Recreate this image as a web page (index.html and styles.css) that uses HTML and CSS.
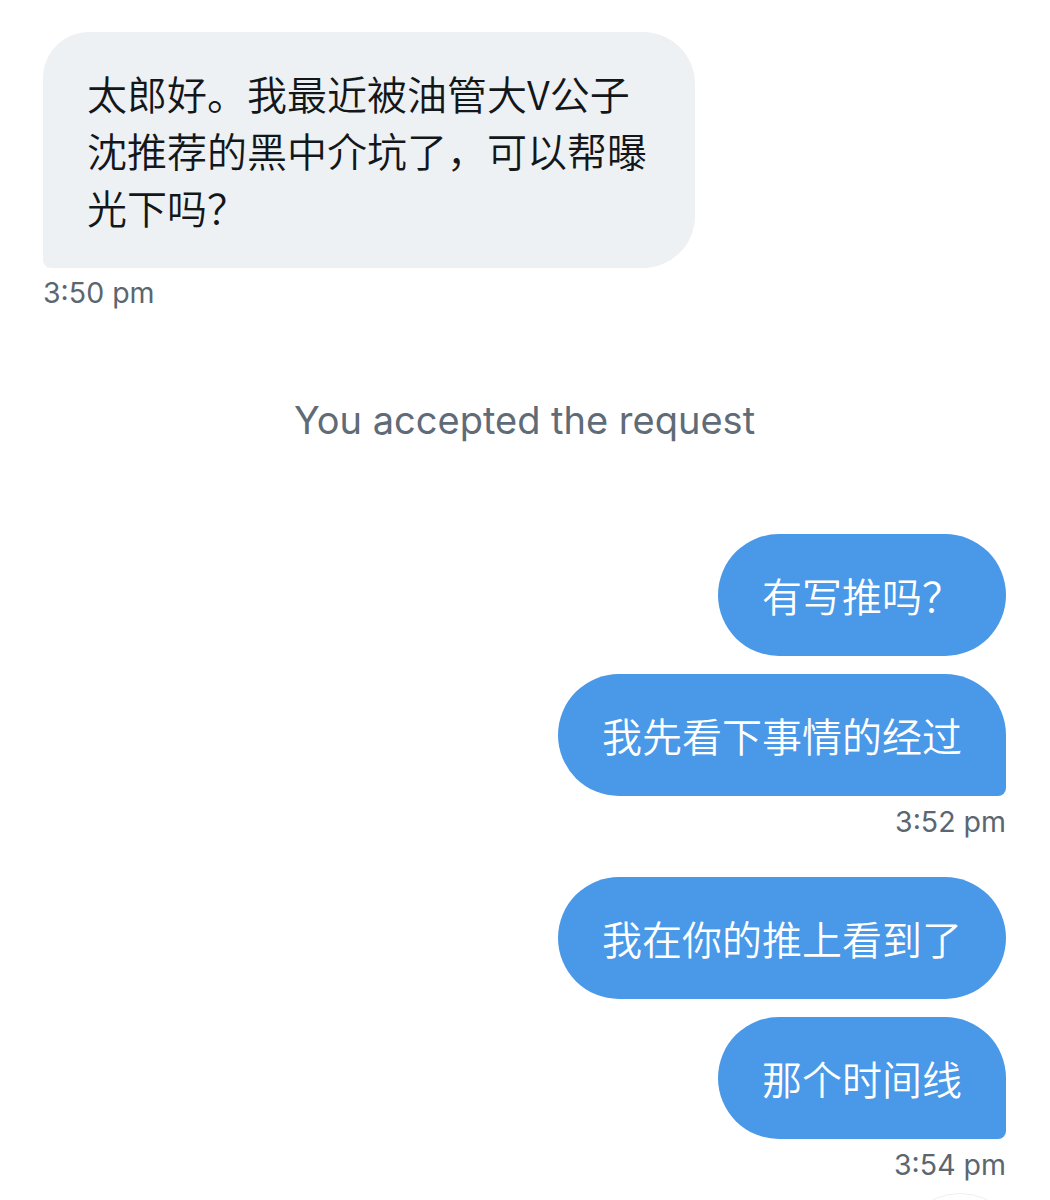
FILE: index.html
```html
<!DOCTYPE html>
<html lang="zh-CN">
<head>
<meta charset="utf-8">
<title>Messages</title>
<link rel="stylesheet" href="styles.css">
</head>
<body>
<main class="thread">
  <div class="group received">
    <div class="bubble gray last">太郎好。我最近被油管大V公子沈推荐的黑中介坑了，可以帮曝光下吗？</div>
    <div class="time">3:50 pm</div>
  </div>

  <div class="notice">You accepted the request</div>

  <div class="group sent first-group">
    <div class="bubble blue">有写推吗？</div>
    <div class="bubble blue last">我先看下事情的经过</div>
    <div class="time">3:52 pm</div>
  </div>

  <div class="group sent second-group">
    <div class="bubble blue">我在你的推上看到了</div>
    <div class="bubble blue last">那个时间线</div>
    <div class="time">3:54 pm</div>
    <div class="ghost-wrap"><div class="ghost"></div></div>
  </div>
</main>
</body>
</html>
```

FILE: styles.css
```css
html, body {
  margin: 0;
  padding: 0;
  background: #ffffff;
  overflow: hidden;
}

body {
  width: 1050px;
  height: 1200px;
}

.thread {
  display: flex;
  flex-direction: column;
  padding: 32px 44px 0 43px;
}

.group {
  display: flex;
  flex-direction: column;
}

.group.received {
  align-items: flex-start;
}

.group.sent {
  align-items: flex-end;
  gap: 18px;
}

.group.first-group {
  margin-top: 90px;
}

.group.second-group {
  margin-top: 39px;
}

.bubble {
  box-sizing: border-box;
  font-family: "Noto Sans CJK SC", "Noto Sans", sans-serif;
  font-size: 40px;
  font-weight: 350;
  line-height: 57px;
  padding: 33px 44px 32px 44px;
}

.bubble.gray {
  background: #eef1f3;
  color: #14171a;
  max-width: 652px;
  border-radius: 46px 52px 52px 8px;
}

.bubble.blue {
  background: #4a98e8;
  color: #ffffff;
  border-radius: 61px;
}

.bubble.blue.last {
  border-radius: 61px 61px 8px 61px;
}

.time {
  font-family: "Inter", "Liberation Sans", sans-serif;
  font-size: 28.5px;
  line-height: 32px;
  color: #5b6670;
  margin-top: 9px;
}

.group.sent .time {
  margin-top: -8px;
}

.notice {
  align-self: center;
  margin-top: 87px;
  font-family: "Inter", "Liberation Sans", sans-serif;
  font-size: 38px;
  line-height: 48px;
  color: #5f6b77;
}

.ghost-wrap {
  width: 124px;
  height: 8px;
  overflow: hidden;
  margin-top: -6px;
  margin-right: -16px;
}

.ghost {
  box-sizing: border-box;
  width: 124px;
  height: 124px;
  border-radius: 50%;
  border: 1px solid #eceff1;
}
```
